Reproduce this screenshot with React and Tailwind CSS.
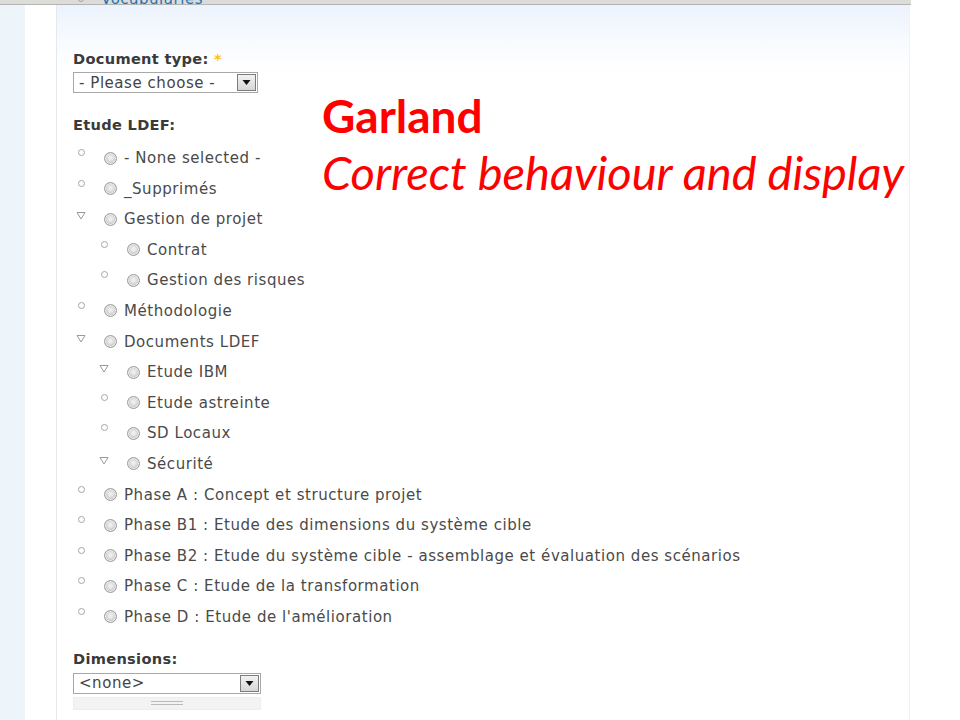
import React from "react";

const FONT = { fontFamily: '"DejaVu Sans", Verdana, sans-serif' };

const terms = [
  { label: "- None selected -", depth: 0, open: false },
  { label: "_Supprimés", depth: 0, open: false },
  { label: "Gestion de projet", depth: 0, open: true },
  { label: "Contrat", depth: 1, open: false },
  { label: "Gestion des risques", depth: 1, open: false },
  { label: "Méthodologie", depth: 0, open: false },
  { label: "Documents LDEF", depth: 0, open: true },
  { label: "Etude IBM", depth: 1, open: true },
  { label: "Etude astreinte", depth: 1, open: false },
  { label: "SD Locaux", depth: 1, open: false },
  { label: "Sécurité", depth: 1, open: true },
  { label: "Phase A : Concept et structure projet", depth: 0, open: false },
  { label: "Phase B1 : Etude des dimensions du système cible", depth: 0, open: false },
  { label: "Phase B2 : Etude du système cible - assemblage et évaluation des scénarios", depth: 0, open: false },
  { label: "Phase C : Etude de la transformation", depth: 0, open: false },
  { label: "Phase D : Etude de l'amélioration", depth: 0, open: false },
];

function Marker({ open }) {
  if (open) {
    return (
      <svg width="10" height="9" viewBox="0 0 10 9" className="mt-[1px]">
        <path d="M1 1.5 H9 L5 8 Z" fill="white" stroke="#9a9a9a" strokeWidth="1" />
      </svg>
    );
  }
  return <span className="ml-[2px] block h-[7px] w-[7px] rounded-full border border-[#a5a5a5] bg-white" />;
}

function Radio() {
  return (
    <span className="block h-[13px] w-[13px] shrink-0 rounded-full border border-[#9c9c9c] bg-[radial-gradient(circle_at_50%_45%,#f4f4f4_0%,#e2e2e2_35%,#b9b9b9_75%,#a8a8a8_100%)] shadow-[inset_0_0_0_1px_#ededed]" />
  );
}

function TermRow({ term }) {
  return (
    <div className="flex h-[30.6px] items-start whitespace-nowrap" style={{ paddingLeft: term.depth * 23 }}>
      <div className="flex w-[31px] shrink-0 justify-start pl-[3px] pt-[1px]">
        <Marker open={term.open} />
      </div>
      <div className="flex items-center gap-[7px] text-[15px] leading-[20px] tracking-[0.55px] text-[#4a4a4a]">
        <Radio />
        <span>{term.label}</span>
      </div>
    </div>
  );
}

function Select({ value, width }) {
  return (
    <div className="flex h-[21px] items-center border border-[#a8a8a8] bg-white" style={{ width }}>
      <span className="flex-1 pl-[5px] text-[15px] leading-[18px] tracking-[0.55px] text-[#444]">{value}</span>
      <span className="mr-[1px] flex h-[17px] w-[19px] items-center justify-center border border-[#7c7c7c] bg-[linear-gradient(#f2f2f2,#d6d6d6)]">
        <svg width="9" height="5" viewBox="0 0 9 5">
          <path d="M0.5 0 H8.5 L4.5 5 Z" fill="#111" />
        </svg>
      </span>
    </div>
  );
}

export default function App() {
  return (
    <div className="relative flex h-[720px] w-[960px] flex-col overflow-hidden bg-white" style={FONT}>
      <div className="h-[5px] w-[911px] shrink-0 border-b border-[#b4b4b4] bg-[#dcdcd8]" />
      <div className="flex flex-1">
        <div className="w-[25px] bg-[#edf4fa]" />
        <div className="w-[32px] border-r border-[#e4e9ee] bg-white" />
        <div className="w-[853px] border-r border-[#f0f2f4] bg-[linear-gradient(#ecf3fd_0px,#fafcff_45px,#ffffff_70px)] pl-[16px]">
          <div className="-mt-[15px] flex h-[18px] items-start">
            <span className="ml-[5px] mt-[6px] block h-[6px] w-[6px] rounded-full border border-[#a5a5a5]" />
            <span className="ml-[17px] text-[15px] leading-[18px] tracking-[0.55px] text-[#1f75b9]">Vocabularies</span>
          </div>

          <div className="mt-[42px] text-[14.6px] font-bold leading-[18px] tracking-[0.3px] text-[#3a3a3a]">
            Document type: <span className="text-[#ffc400]">*</span>
          </div>
          <div className="mt-[4px]">
            <Select value="- Please choose -" width="185px" />
          </div>

          <div className="mt-[23px] text-[14.6px] font-bold leading-[18px] tracking-[0.3px] text-[#3a3a3a]">Etude LDEF:</div>
          <div className="mt-[14px]">
            {terms.map((t) => (
              <TermRow key={t.label} term={t} />
            ))}
          </div>

          <div className="mt-[12px] text-[14.6px] font-bold leading-[18px] tracking-[0.3px] text-[#3a3a3a]">Dimensions:</div>
          <div className="mt-[5px]">
            <Select value="<none>" width="188px" />
          </div>
          <div className="mt-[3px] flex h-[13px] w-[188px] items-center justify-center border border-[#eeeeee] bg-[#f3f3f3]">
            <span className="block h-[4px] w-[32px] border-y border-[#b9b9b9]" />
          </div>
        </div>
      </div>
      <div className="absolute left-[322px] top-[87px] text-[#ff0000]" style={{ fontFamily: "Lato, sans-serif" }}>
        <div className="text-[46px] font-bold leading-[57px]">Garland</div>
        <div className="text-[47px] italic leading-[57px]">Correct behaviour and display</div>
      </div>
    </div>
  );
}
